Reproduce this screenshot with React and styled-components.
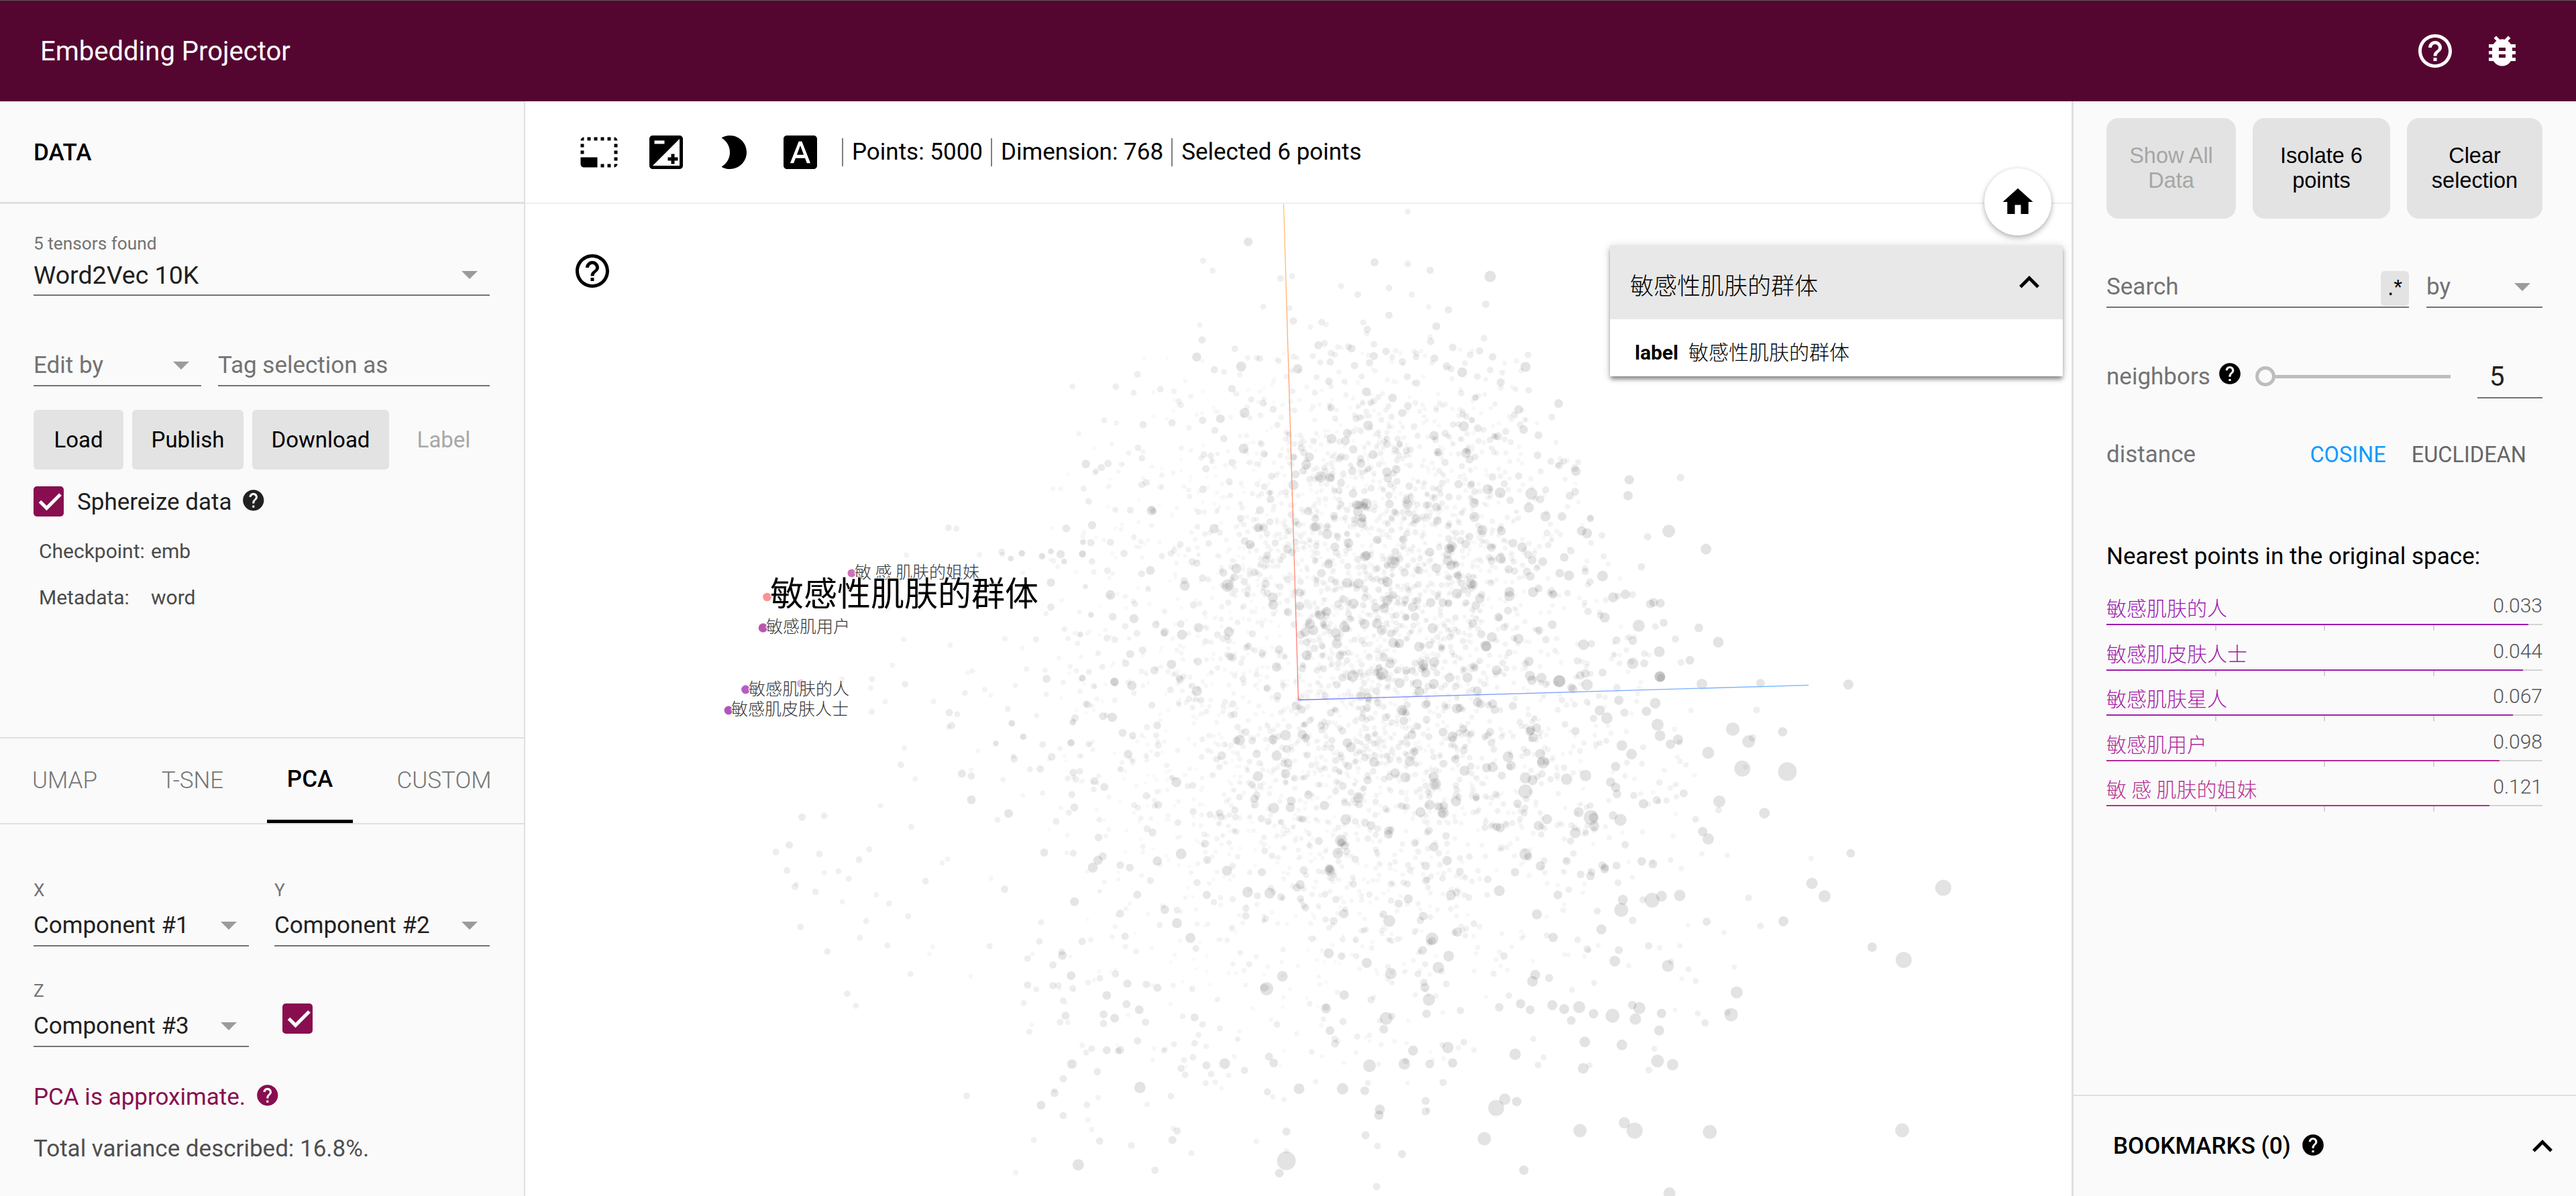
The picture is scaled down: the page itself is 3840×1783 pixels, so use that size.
import React from "react";
import styled, { createGlobalStyle } from "styled-components";
import {
  MdHelpOutline,
  MdBugReport,
  MdPhotoSizeSelectSmall,
  MdBrightness2,
  MdFontDownload,
  MdHome,
  MdHelp,
  MdExpandLess,
} from "react-icons/md";

const GlobalStyle = createGlobalStyle`
  * { box-sizing: border-box; }
  html, body { margin: 0; padding: 0; background: #fff; }
  body { font-family: Roboto, "Noto Sans CJK SC", sans-serif; font-size: 35px; color: #000; }
  svg { display: block; flex: none; }
`;

const Page = styled.div`
  display: flex;
  flex-direction: column;
  width: 3840px;
  height: 1783px;
  overflow: hidden;
`;

const Header = styled.header`
  flex: none;
  display: flex;
  align-items: center;
  height: 151px;
  padding: 0 80px 0 60px;
  border-top: 1px solid #5f5a5d;
  background: #550630;
  color: #fff;
`;

const Title = styled.h1`
  flex: 1;
  margin: 0;
  padding-top: 2px;
  font-size: 40px;
  font-weight: 400;
  line-height: 50px;
`;

const HeaderIcons = styled.div`
  display: flex;
  gap: 40px;
`;

const Body = styled.div`
  flex: 1;
  display: flex;
  min-height: 0;
`;

/* ---------- left pane ---------- */

const LeftPane = styled.aside`
  flex: none;
  display: flex;
  flex-direction: column;
  width: 783px;
  border-top: 2px solid #ebebeb;
  border-right: 2px solid #e0e0e0;
  background: #fafafa;
`;

const PaneTitle = styled.div`
  display: flex;
  align-items: center;
  height: 151px;
  padding-left: 50px;
  border-bottom: 3px solid #e0e0e0;
  font-weight: 500;
`;

const DataSection = styled.section`
  height: 795px;
  padding: 42px 51px 0 50px;
`;

const FieldLabel = styled.div`
  height: 34px;
  margin-bottom: ${(p) => p.$gap}px;
  font-size: 26.25px;
  line-height: 34px;
  color: #737373;
`;

const FieldBox = styled.div`
  display: flex;
  align-items: flex-start;
  justify-content: space-between;
  width: ${(p) => (p.$w ? `${p.$w}px` : "auto")};
  height: 57px;
  border-bottom: 2px solid #737373;
  font-size: ${(p) => p.$size || 35}px;
  line-height: 52px;
  white-space: nowrap;
  color: ${(p) => (p.$placeholder ? "#737373" : "#212121")};
`;

const Caret = styled.span`
  width: 0;
  height: 0;
  margin: 20px 18px 0 0;
  border: 12px solid transparent;
  border-top-color: #9b9b9b;
  border-bottom: 0;
`;

const FieldRow = styled.div`
  display: flex;
  gap: ${(p) => p.$gap}px;
  margin-top: ${(p) => p.$top}px;
`;

const ButtonRow = styled.div`
  display: flex;
  gap: 13px;
  margin-top: 35px;
`;

const FlatButton = styled.button`
  width: ${(p) => p.$w}px;
  height: 89px;
  padding: 0;
  border: 0;
  border-radius: 6px;
  background: ${(p) => (p.disabled ? "transparent" : "#e3e3e3")};
  color: ${(p) => (p.disabled ? "#a8a8a8" : "#000")};
  font-family: inherit;
  font-size: 33px;
`;

const CheckRow = styled.div`
  display: flex;
  align-items: center;
  height: 45px;
  margin-top: 25px;
  color: #212121;

  span { margin: 0 14px 0 20px; padding-top: 1px; }
  svg:last-child { margin-top: -4px; }
`;

const MetaGrid = styled.dl`
  display: grid;
  grid-template-columns: 167px 1fr;
  row-gap: 29px;
  margin: 32px 0 0 8px;
  font-size: 30px;
  line-height: 40px;
  color: #4a4a4a;

  dt, dd { margin: 0; }
`;

const Tabs = styled.nav`
  display: flex;
  height: 130px;
  border-top: 2px solid #e0e0e0;
  border-bottom: 2px solid #e0e0e0;
`;

const Tab = styled.div`
  display: flex;
  align-items: center;
  justify-content: center;
  width: ${(p) => p.$w}px;
  height: 126px;
  margin: 0 ${(p) => (p.$active ? 17 : 0)}px;
  padding-bottom: ${(p) => (p.$active ? 1 : 2)}px;
  padding-left: ${(p) => (p.$active ? 0 : 1)}px;
  border-bottom: ${(p) => (p.$active ? "5px solid #000" : "0")};
  color: ${(p) => (p.$active ? "#000" : "#757575")};
  font-weight: ${(p) => (p.$active ? 500 : 300)};
`;

const Projection = styled.section`
  padding: 81px 51px 0 50px;
`;

const Field = styled.div`
  width: 321px;
`;

const ToggleCell = styled.div`
  display: flex;
  align-items: flex-end;
  padding: 0 0 20px 12px;
`;

const Notice = styled.div`
  display: flex;
  align-items: center;
  gap: 14px;
  height: 40px;
  margin-top: 54px;
  color: #880e4f;

  svg { margin-top: -5px; }
`;

const Variance = styled.div`
  margin-top: 38px;
  line-height: 40px;
  color: #4f4f4f;
`;

/* ---------- centre ---------- */

const Main = styled.main`
  position: relative;
  flex: 1;
  display: flex;
  flex-direction: column;
  background: #fff;
`;

const Toolbar = styled.div`
  flex: none;
  display: flex;
  align-items: center;
  height: 153px;
  padding-left: 80px;
  border-bottom: 2px solid #eee;
`;

const ToolIcons = styled.div`
  display: flex;
  gap: 40px;
  margin-right: 32px;
`;

const Stat = styled.div`
  height: 42px;
  margin-right: 12px;
  padding-left: 13px;
  border-left: 2px solid #808080;
  line-height: 42px;
  white-space: nowrap;
`;

const Cloud = styled.svg`
  width: 2305px;
  height: 1479px;
`;

const CanvasHelp = styled.div`
  position: absolute;
  left: 70px;
  top: 223px;
`;

const HomeButton = styled.div`
  position: absolute;
  top: 100px;
  right: 30px;
  display: flex;
  align-items: center;
  justify-content: center;
  width: 100px;
  height: 100px;
  border-radius: 50%;
  background: #fff;
  box-shadow: 0 4px 8px rgba(0, 0, 0, 0.26), 0 0 5px rgba(0, 0, 0, 0.1);
`;

const InfoCard = styled.div`
  position: absolute;
  top: 215px;
  right: 13px;
  width: 675px;
  background: #fff;
  box-shadow: 0 5px 6px -1px rgba(0, 0, 0, 0.4), 0 2px 12px rgba(0, 0, 0, 0.2);
`;

const InfoHead = styled.div`
  display: flex;
  align-items: center;
  justify-content: space-between;
  height: 110px;
  padding: 0 19px 0 30px;
  background: #e8e8e8;
  font-size: 35px;
  font-weight: 300;

  span { padding-top: 4px; }
  svg { margin-right: 1px; }
`;

const InfoBody = styled.div`
  display: flex;
  align-items: center;
  gap: 15px;
  height: 85px;
  padding: 14px 0 0 37px;
  font-size: 30px;
  font-weight: 300;
  line-height: 40px;

  b { font-weight: 700; }
`;

const PointLabel = styled.text`
  font-family: "Noto Sans CJK SC", sans-serif;
  font-size: ${(p) => (p.$selected ? 50 : 25)}px;
  font-weight: ${(p) => (p.$selected ? 400 : 300)};
  fill: ${(p) => (p.$selected ? "#000" : "#333")};
  stroke: #fff;
  stroke-opacity: 0.75;
  stroke-width: 3px;
  paint-order: stroke;
  white-space: pre;
`;

/* ---------- right pane ---------- */

const RightPane = styled.aside`
  flex: none;
  display: flex;
  flex-direction: column;
  width: 752px;
  border-left: 3px solid #e0e0e0;
  background: #fafafa;
`;

const Inspector = styled.section`
  flex: 1;
  padding: 25px 50px 0 49px;
`;

const ActionRow = styled.div`
  display: flex;
  gap: 25px;
`;

const ActionButton = styled.button`
  width: ${(p) => p.$w}px;
  height: 150px;
  padding: 0 25px;
  border: 0;
  border-radius: 18px;
  background: #e3e3e3;
  color: ${(p) => (p.disabled ? "#a6a6a6" : "#000")};
  font-family: "Liberation Sans", Arial, sans-serif;
  font-size: 32.5px;
  line-height: 37px;
`;

const RegexToggle = styled.span`
  width: 42px;
  height: 52px;
  margin-top: 2px;
  border-radius: 6px;
  background: #e3e3e3;
  color: #000;
  font-family: "Liberation Sans", Arial, sans-serif;
  font-size: 33px;
  line-height: 50px;
  text-align: center;
`;

const ParamRow = styled.div`
  display: flex;
  align-items: flex-start;
  height: ${(p) => p.$h}px;
  margin-top: ${(p) => p.$top}px;
  line-height: 52px;
  color: #737373;
`;

const HelpDot = styled(MdHelp)`
  margin: 2px 0 0 10px;
  color: #000;
`;

const Slider = styled.div`
  display: flex;
  align-items: center;
  width: 291px;
  height: 50px;
  margin-left: 19px;
`;

const Knob = styled.span`
  width: 30px;
  height: 30px;
  border: 5px solid #bdbdbd;
  border-radius: 50%;
`;

const Track = styled.span`
  flex: 1;
  height: 5px;
  background: #bdbdbd;
`;

const NumberInput = styled.div`
  width: 97px;
  height: 58px;
  margin-left: auto;
  padding-left: 18px;
  border-bottom: 2px solid #737373;
  color: #212121;
  font-size: 40px;
`;

const MetricGroup = styled.div`
  display: flex;
  gap: 38px;
  margin-left: auto;
  padding-right: 24px;
  font-size: 32.5px;
`;

const Metric = styled.span`
  color: ${(p) => (p.$active ? "#0f9bff" : "#666")};
`;

const ListTitle = styled.div`
  margin-top: 102px;
  margin-bottom: 24px;
  line-height: 52px;
`;

const Neighbor = styled.div`
  height: 67.5px;
`;

const NeighborText = styled.div`
  display: flex;
  justify-content: space-between;
  height: 50px;
  font-size: 30px;
  line-height: 40px;
`;

const NeighborName = styled.span`
  padding-top: 8px;
  color: ${(p) => p.$color};
  font-weight: 300;
  white-space: pre;
`;

const NeighborValue = styled.span`
  padding-top: 3px;
  color: #555;
  font-weight: 300;
`;

const Bar = styled.div`
  height: 2px;
  background: #d3d3d3;
`;

const BarFill = styled.div`
  height: 2px;
  background: ${(p) => p.$color};
`;

const Ticks = styled.div`
  display: grid;
  grid-template-columns: repeat(4, 1fr);
  height: 8px;

  span { border-right: 2px solid #d3d3d3; margin-right: -1px; }
  span:last-child { border: 0; }
`;

const Bookmarks = styled.footer`
  display: flex;
  align-items: center;
  height: 151px;
  padding: 0 20px 0 59px;
  border-top: 2px solid #e0e0e0;
  font-weight: 500;

  svg:last-child { margin-left: auto; }
`;

const BookmarkHelp = styled(MdHelp)`
  margin: -3px 0 0 14px;
`;

/* ---------- data ---------- */

const NEIGHBORS = [
  { name: "敏感肌肤的人", value: "0.033", color: "#9b19b1" },
  { name: "敏感肌皮肤人士", value: "0.044", color: "#9e1cad" },
  { name: "敏感肌肤星人", value: "0.067", color: "#a521a6" },
  { name: "敏感肌用户", value: "0.098", color: "#af2a9b" },
  { name: "敏 感 肌肤的姐妹", value: "0.121", color: "#b63092" },
];

const HIGHLIGHTS = [
  { x: 1194, y: 1019, r: 6, fill: "#dfa6dc" },
  { x: 1269.5, y: 854.5, r: 6, fill: "#cf70b8", text: "敏 感 肌肤的姐妹", tx: 1274, ty: 862 },
  { x: 1143.5, y: 890, r: 6.3, fill: "#ff9191", text: "敏感性肌肤的群体", tx: 1148, ty: 903, selected: true },
  { x: 1137.5, y: 936, r: 6.8, fill: "#bb57ab", text: "敏感肌用户", tx: 1142, ty: 943 },
  { x: 1111.5, y: 1028, r: 6.4, fill: "#b65cc6", text: "敏感肌肤的人", tx: 1116, ty: 1036 },
  { x: 1086, y: 1059, r: 6.4, fill: "#b055bd", text: "敏感肌皮肤人士", tx: 1090, ty: 1066 },
];

/* Projected points, stored per tile as x, y, radius triples in tile units. */
const TILES = [
  {
    ox: 1100, oy: 1000, sx: 0.8476, sy: 2.0026,
    pts: [
      81,437,5.5,109,433,5,180,403,4,219,466,4.5,65,520,5.5,48,541,5,62,596,5,103,547,5,109,603,4,127,599,4.5,140,621,4.5,153,564,5,166,533,4.5,
      72,645,5,74,637,4,98,660,5,132,690,4,175,669,4,191,695,4.5,162,747,4.5,215,733,4.5,79,765,5,154,797,4.5,113,838,5,189,820,4.5,138,964,5,149,1000,4.5,
      218,905,4.5,237,628,5,246,824,3.5,242,846,3.5,258,574,4,265,563,4,318,822,4.5,337,652,5.5,320,621,3.5,294,912,3.5,289,1269,5,351,1498,4,
      206,281,5,210,230,4,224,323,4,283,307,6,295,314,5.5,295,295,3.5,295,385,6.5,346,157,5,349,263,5.5,348,255,4,342,426,6.5,328,445,4.5,335,325,4,
      303,239,3.5,326,217,4.5,369,294,4.5,382,293,5.5,493,249,6.5,387,543,6,402,450,5,421,215,5.5,385,220,5,407,232,4,361,197,5,432,300,5,427,324,5,
      425,408,6,463,347,6,516,373,5.5,486,185,6,473,139,7,476,33,6.5,390,24,6,423,153,5,531,222,5,385,365,4,360,372,3.5,
      1403,41,7.5,1292,37,6.5,1218,40,8,1257,174,10,1320,182,7,1277,211,9.5,1282,200,5.5,1226,245,9,1269,292,12,1273,287,4,1326,301,14,1240,390,9,
      1239,416,5,1297,425,8,1219,480,7,1226,502,8.5,1406,545,6.5,1356,560,4,1218,547,4,1250,551,4,1357,635,8.5,1373,673,9,1523,648,12,1277,678,5,
      1321,748,7.5,1292,762,5,1224,749,6,1246,781,4,1433,825,7,1473,863,12,1175,881,9,1179,868,4.5,1155,685,11,1167,673,8,1190,671,8.5,1116,714,10.5,
      1091,772,7.5,1262,960,9,1255,1027,10,1250,1020,5,1222,1051,5.5,1213,1023,4.5,1210,926,4.5,1201,891,4.5,1259,885,4,1108,867,8,1113,834,6,1190,821,4,
      1063,1004,9,1044,1010,7.5,1029,998,7.5,1105,1030,10.5,1081,1024,7,1134,1040,8.5,1139,1007,9,1130,998,6.5,1167,1023,7,1164,1074,7.5,1053,1044,6.5,
      1070,1108,8,1117,1117,8,1158,1129,4.5,1162,1165,9.5,1181,1176,8.5,1151,1192,5,1068,1187,8,1076,1178,4.5,1018,1154,4.5,1011,1177,5,1005,1099,4.5,
      982,1145,8.5,958,1305,12,969,1279,8.5,984,1286,7,943,1397,10,1064,1373,10,1120,1350,8.5,1133,1373,12,1228,1377,10.5,1471,1372,10.5,993,1491,7,
      1177,1560,9,839,1443,6,807,1540,5.5,808,1419,5,793,1387,6,693,1463,14,693,1434,4,684,1500,6.5,693,1376,6,811,1310,7.5,810,1327,7,869,1284,6,869,1316,6,
      872,1312,4,792,1254,6.5,764,1248,8.5,796,1231,4.5,709,1248,8,730,1227,4,798,1179,9.5,842,1174,8.5,844,1165,5,853,1134,7.5,874,1174,6.5,903,1171,7,
      897,1125,8.5,890,1117,4.5,891,1229,5.5,846,1231,3.5,819,1038,9.5,816,1070,6.5,798,1088,4,748,1074,6.5,758,1106,4,754,1099,5,681,1056,5,669,1257,5.5,
      676,1272,4,690,1280,4,671,1152,6,677,1171,6.5,686,1178,3,640,1193,5.5,615,1173,8,592,1178,6,598,1204,5,565,1206,5,560,1187,5.5,575,1154,5,591,1231,4.5,
      603,1228,4,611,1246,3.5,620,1208,4,508,1244,8.5,430,1475,8.5,527,1491,5.5,573,1440,4.5,497,1417,5,555,1374,5.5,550,1367,4,549,1401,6,457,1404,5.5,
      447,1370,4,442,1341,4,441,1296,5,411,1328,5.5,383,1297,6.5,400,1261,6,400,1252,4,411,1218,5.5,422,1174,7,454,1197,5.5,455,1274,4,547,1270,5,517,1295,4,
      374,1401,4.5,466,1133,6,483,1132,6,440,1140,4.5,435,1118,4,505,1105,5.5,524,1162,3.5,526,1127,3.5,538,1134,4.5,551,1115,4.5,577,1112,5,582,1087,4.5,
      368,1078,4.5,371,1057,3.5,361,992,4.5,366,938,5.5,377,951,4.5,398,940,5.5,405,940,5,421,910,6.5,398,878,5.5,410,850,6.5,366,859,5,381,808,5,435,808,5.5,
      446,803,4,655,1405,4,372,845,3.5,383,751,4.5,414,1030,6,407,1049,5,417,1050,4,423,948,5,411,985,5,462,1026,6,462,1053,5.5,466,969,6.5,476,1037,6.5,
      491,995,6,507,1012,6.5,515,1049,5.5,516,936,5.5,530,946,6,477,905,5.5,577,1035,6,587,1056,5,609,1068,4.5,688,912,8,668,949,10,665,946,6,
      825,904,8.5,873,982,9,885,886,8.5,898,852,8,877,800,9.5,877,806,6,823,747,9,766,968,7,743,1008,7.5,743,1005,5,1004,927,8,1025,917,6,989,994,7,
      1001,1012,6.5,1030,796,7,1061,803,5,909,780,7,962,657,8,672,664,8,644,661,8,560,547,8,455,566,7,461,554,6,748,596,8,748,594,6,995,548,9,
      1014,583,7,912,600,6,896,567,7,762,507,9,762,510,6,758,545,8,734,508,6,891,424,8.5,890,426,6,881,338,9,881,340,6,1078,438,11,1081,438,7,1058,484,8,
      1115,445,9,995,360,10.5,995,320,8.5,1017,274,9,1015,272,6,973,257,8,1047,324,8.5,1071,313,8.5,1109,286,7,1129,249,8,1117,223,8,1162,161,9,
      1165,194,8,1098,141,8.5,1109,348,7,1073,42,8.5,1038,31,9,1165,18,8,1159,97,8,1148,121,7,1113,88,7,634,207,8,630,208,6,692,192,8,676,205,7,
      713,190,7,692,308,7,677,410,8,698,408,7,784,378,8,768,444,8,741,402,7,839,118,8,840,121,6,770,215,7,1144,397,7,1161,386,6,1132,372,5.5,
      1195,366,6,1178,350,4,1198,281,4,1204,118,4,1287,117,5,1142,569,6.5,1156,577,6.5,1192,591,4,1110,582,6,1095,592,6.5,1036,669,6.5,895,935,5,
    ],
  },
  {
    ox: 1500, oy: 300, sx: 1.206, sy: 2.119,
    pts: [
      435,128,6.5,354,188,4.5,371,219,4.5,493,244,5,514,237,4.5,662,193,6,722,33,4.5,722,198,5,762,218,5.5,870,238,8.5,602,268,4.5,632,295,5,688,274,5,
      729,295,4.5,862,325,5.5,795,343,5.5,759,334,4,688,360,5.5,773,395,6,567,382,5,575,390,4,547,397,4,642,383,4.5,649,405,5.5,648,419,4,509,338,4.5,
      516,378,5.5,462,333,4.5,348,391,4,352,438,5.5,411,466,5,434,495,4,456,497,5,561,455,6,572,449,5,615,460,5,584,480,5,591,485,4.5,661,452,5,
      661,489,6,653,510,5.5,626,519,5.5,763,443,5.5,762,428,4,859,433,5,851,473,5.5,834,485,5,938,485,5,700,472,4,738,482,4.5,733,474,4,712,507,5.5,792,521,6,
      800,530,5,870,533,5,374,532,5.5,517,491,4.5,551,489,4.5,490,505,4.5,236,547,5,197,586,5,119,585,4.5,229,605,4.5,277,594,5,310,632,4.5,
      889,572,6,847,554,5,844,620,4.5,993,639,6.5,921,658,6.5,981,682,5,932,690,4,930,721,6.5,924,706,5,884,743,6,907,761,4.5,385,687,6.5,
      353,692,5.5,246,706,5.5,298,700,5.5,237,779,5,244,812,5,183,828,5.5,171,841,5.5,161,853,4.5,207,831,4,139,908,4.5,148,948,5,196,975,4.5,
      84,908,3.5,98,908,3.5,28,1112,5,8,1129,4.5,64,1122,5,80,1106,4.5,104,1138,4.5,137,1114,5.5,138,1077,4.5,182,1167,5,142,1217,4,259,1166,6.5,261,977,7,262,974,5,
      223,976,5,176,692,4.5,198,701,4,190,767,3.5,994,835,5.5,1024,853,7,1022,843,5.5,1028,825,4.5,1120,880,7,1212,873,5.5,1118,930,7,944,924,9,960,942,6,
      1013,930,6,888,921,8,999,996,6.5,1050,1003,5.5,1071,1056,5,1191,1042,9.5,1153,1060,5.5,1258,1099,8,1015,1104,5.5,1003,1125,6.5,1074,1122,4.5,
      1041,1170,5.5,1072,1184,8,1142,1155,5.5,938,1117,6,911,1080,6.5,972,1048,5,942,1185,6.5,936,1170,6,995,1175,6.5,947,1235,7.5,957,1223,6,983,1242,6.5,
      984,1240,5,1009,1238,5,1091,1251,7.5,1113,1242,7,1126,1243,5,1158,1272,6.5,1164,1267,6.5,1176,1270,6.5,1046,1296,5.5,1076,1315,7.5,1137,1341,9,
      1182,1332,6,1167,1344,5,1245,1348,6.5,1203,1383,5.5,1280,1393,8,1126,1388,6.5,1097,1387,6,1052,1398,5.5,1038,1401,8,1174,1423,8,1147,1429,5,
      1126,1460,8.5,1147,1460,6,1229,1450,6.5,1213,1457,5,1175,1501,8,1177,1505,6,1072,1489,6,1041,1492,6.5,1027,1452,5.5,994,1516,9,1019,1541,6.5,
      1098,1537,5.5,945,1513,7,565,871,8.5,564,873,5,701,847,6.5,453,1031,7,453,1033,5,398,1214,9.5,400,1216,6,696,1140,9.5,697,1138,6,647,956,8.5,634,960,6.5,
      640,1000,6.5,641,1002,5,195,1385,5,235,1365,5,245,1418,5.5,133,1369,4.5,152,1306,4.5,266,1482,6,297,1463,7,311,1506,5.5,137,1506,5,194,1518,6,
      564,1307,7,560,1305,5.5,608,1344,8,611,1350,6,537,1362,7,675,1355,7.5,718,1314,6,719,1315,4.5,885,1314,6.5,886,1316,5,839,1334,6.5,873,1377,7.5,
      921,1382,7.5,742,1407,7.5,862,1405,8,707,1397,7,486,1471,7,623,1500,8.5,676,1492,9,673,1500,7,690,1461,7,763,1268,7,785,1268,6.5,795,1268,5.5,
      902,1293,6,797,1505,7,777,793,6,733,712,5,789,733,5.5,833,816,6,775,790,5,
    ],
  },
  {
    ox: 1040, oy: 780, sx: 2.6133, sy: 3,
    pts: [
      977,20,5,1008,24,4.5,813,143,4,1098,141,4,1185,128,5,1187,140,4,1263,135,4.5,1220,158,4,1342,147,4.5,1377,126,4,1373,162,3,1428,171,4,1499,138,5,1501,84,4,
      1500,60,3.5,1505,41,3.5,1383,22,3,1552,62,3,1376,375,5.5,1357,404,4,1418,344,3.5,1533,411,4,1511,283,3.5,1267,222,3.5,742,382,4,867,384,3.5,803,520,4,984,545,4,1197,516,4,
      1318,520,4.5,1442,516,4,1480,538,4,1490,498,4,1266,558,3.5,1407,603,3.5,759,635,4,1069,661,4,1052,670,3.5,1281,652,4,1353,658,4,1524,665,4.5,
      1448,671,3,562,697,4,679,697,4.5,674,737,4,808,720,5,1041,759,4.5,1118,743,4,1142,771,3.5,1237,725,4,1358,765,4,1424,712,4,1498,694,5,
      1543,729,4.5,731,799,4,919,797,4,678,843,4.5,980,847,5.5,1011,854,4.5,1208,831,4.5,1320,860,4,1512,808,5,1476,838,3,1224,895,4.5,1462,890,4.5,989,905,5.5,
      977,912,4,1267,955,4.5,1454,982,5,1161,985,4,
    ],
  },
];

/* Dense core: x, y, spread x, spread y, number of points. */
const CORES = [
  [2050, 790, 150, 150, 1750],
  [2100, 1120, 180, 190, 1750],
  [1830, 1120, 170, 230, 850],
];

function seeded(seed) {
  let s = seed;
  return () => {
    s = (s + 0x6d2b79f5) | 0;
    let t = Math.imul(s ^ (s >>> 15), 1 | s);
    t = (t + Math.imul(t ^ (t >>> 7), 61 | t)) ^ t;
    return ((t ^ (t >>> 14)) >>> 0) / 4294967296;
  };
}

function buildPoints() {
  const points = [];
  const rand = seeded(29);
  CORES.forEach(([cx, cy, sx, sy, count]) => {
    for (let i = 0; i < count; i += 1) {
      const m = Math.sqrt(-2 * Math.log(1 - rand()));
      const a = rand() * Math.PI * 2;
      const x = cx + m * Math.cos(a) * sx;
      const y = cy + m * Math.sin(a) * sy;
      const r = Math.min(7.5, 2.9 - Math.log(1 - rand()) * 1.1 + Math.max(-0.2, (x - 2000) / 1100));
      const inside = y > 510 && y < 1590 && x > 1560 && x < 2530 && x - 2280 < (y - 560) * 0.45;
      if (inside) points.push({ x, y, r });
    }
  });
  TILES.forEach(({ ox, oy, sx, sy, pts }) => {
    for (let i = 0; i < pts.length; i += 3) {
      points.push({ x: ox + pts[i] / sx, y: oy + pts[i + 1] / sy, r: pts[i + 2] });
    }
  });
  return points;
}

const POINTS = buildPoints();
const opacityOf = (r) => Math.min(0.11, Math.max(0.022, (r - 1.9) * 0.022)).toFixed(3);

/* ---------- pieces ---------- */

function Select({ label, gap = 10, value, w, size, placeholder }) {
  return (
    <div>
      {label && <FieldLabel $gap={gap}>{label}</FieldLabel>}
      <FieldBox $w={w} $size={size} $placeholder={placeholder}>
        {value}
        <Caret />
      </FieldBox>
    </div>
  );
}

function Checkbox() {
  return (
    <svg width="45" height="45" viewBox="0 0 45 45">
      <rect width="45" height="45" rx="5" fill="#880e4f" />
      <path d="M9.5 22.5 L19.5 32.5 L40 12" fill="none" stroke="#fff" strokeWidth="5.2" />
    </svg>
  );
}

function ExposureIcon() {
  return (
    <svg width="60" height="60" viewBox="0 0 24 24">
      <path d="M15 17v2h2v-2h2v-2h-2v-2h-2v2h-2v2h2zm5-15H4c-1.1 0-2 .9-2 2v16c0 1.1.9 2 2 2h16c1.1 0 2-.9 2-2V4c0-1.1-.9-2-2-2zM5 5h6v2H5V5zm15 15H4L20 4v16z" />
    </svg>
  );
}

function Scatter() {
  return (
    <Cloud viewBox="783 304 2305 1479">
      <defs>
        <linearGradient id="axisUp" gradientUnits="userSpaceOnUse" x1="1913" y1="304" x2="1935" y2="1044">
          <stop offset="0" stopColor="#ffbd66" />
          <stop offset="1" stopColor="#ff6b6b" />
        </linearGradient>
        <linearGradient id="axisSide" gradientUnits="userSpaceOnUse" x1="1935" y1="1043" x2="2696" y2="1021">
          <stop offset="0" stopColor="#7373ff" />
          <stop offset="1" stopColor="#7cc4ff" />
        </linearGradient>
      </defs>
      <g>
        {POINTS.map((p, i) => (
          <circle key={i} cx={p.x.toFixed(1)} cy={p.y.toFixed(1)} r={p.r.toFixed(1)} fillOpacity={opacityOf(p.r)} />
        ))}
      </g>
      <line x1="1913.5" y1="304" x2="1935.5" y2="1044" stroke="url(#axisUp)" strokeWidth="1.2" />
      <line x1="1935" y1="1043.5" x2="2696" y2="1021.5" stroke="url(#axisSide)" strokeWidth="1.3" />
      {HIGHLIGHTS.map((h) => (
        <circle key={h.x} cx={h.x} cy={h.y} r={h.r} fill={h.fill} />
      ))}
      {HIGHLIGHTS.filter((h) => h.text).map((h) => (
        <PointLabel key={h.text} x={h.tx} y={h.ty} $selected={h.selected}>
          {h.text}
        </PointLabel>
      ))}
    </Cloud>
  );
}

export default function App() {
  return (
    <Page>
      <GlobalStyle />
      <Header>
        <Title>Embedding Projector</Title>
        <HeaderIcons>
          <MdHelpOutline size={60} />
          <MdBugReport size={60} />
        </HeaderIcons>
      </Header>
      <Body>
        <LeftPane>
          <PaneTitle>DATA</PaneTitle>
          <DataSection>
            <Select label="5 tensors found" gap={4} value="Word2Vec 10K" size={37.5} />
            <FieldRow $gap={25} $top={78}>
              <Select value="Edit by" w={250} placeholder />
              <FieldBox $w={405} $placeholder>Tag selection as</FieldBox>
            </FieldRow>
            <ButtonRow>
              <FlatButton $w={134}>Load</FlatButton>
              <FlatButton $w={166}>Publish</FlatButton>
              <FlatButton $w={204}>Download</FlatButton>
              <FlatButton $w={137} disabled>Label</FlatButton>
            </ButtonRow>
            <CheckRow>
              <Checkbox />
              <span>Sphereize data</span>
              <MdHelp size={37.5} />
            </CheckRow>
            <MetaGrid>
              <dt>Checkpoint:</dt>
              <dd>emb</dd>
              <dt>Metadata:</dt>
              <dd>word</dd>
            </MetaGrid>
          </DataSection>
          <Tabs>
            <Tab $w={192}>UMAP</Tab>
            <Tab $w={189}>T-SNE</Tab>
            <Tab $w={128} $active>PCA</Tab>
            <Tab $w={237}>CUSTOM</Tab>
          </Tabs>
          <Projection>
            <FieldRow $gap={38} $top={0}>
              <Field><Select label="X" value="Component #1" /></Field>
              <Field><Select label="Y" value="Component #2" /></Field>
            </FieldRow>
            <FieldRow $gap={38} $top={49}>
              <Field><Select label="Z" value="Component #3" /></Field>
              <ToggleCell><Checkbox /></ToggleCell>
            </FieldRow>
            <Notice>
              PCA is approximate.
              <MdHelp size={37.5} />
            </Notice>
            <Variance>Total variance described: 16.8%.</Variance>
          </Projection>
        </LeftPane>

        <Main>
          <Toolbar>
            <ToolIcons>
              <MdPhotoSizeSelectSmall size={60} />
              <ExposureIcon />
              <MdBrightness2 size={60} />
              <MdFontDownload size={60} />
            </ToolIcons>
            <Stat>Points: 5000</Stat>
            <Stat>Dimension: 768</Stat>
            <Stat>Selected 6 points</Stat>
          </Toolbar>
          <Scatter />
          <CanvasHelp>
            <MdHelpOutline size={60} />
          </CanvasHelp>
          <HomeButton>
            <MdHome size={54} />
          </HomeButton>
          <InfoCard>
            <InfoHead>
              <span>敏感性肌肤的群体</span>
              <MdExpandLess size={60} />
            </InfoHead>
            <InfoBody>
              <b>label</b>
              <span>敏感性肌肤的群体</span>
            </InfoBody>
          </InfoCard>
        </Main>

        <RightPane>
          <Inspector>
            <ActionRow>
              <ActionButton $w={193} disabled>Show All Data</ActionButton>
              <ActionButton $w={205}>Isolate 6 points</ActionButton>
              <ActionButton $w={202}>Clear selection</ActionButton>
            </ActionRow>
            <FieldRow $gap={26} $top={76}>
              <FieldBox $w={451} $placeholder>
                Search
                <RegexToggle>.*</RegexToggle>
              </FieldBox>
              <Select value="by" w={173} placeholder />
            </FieldRow>
            <ParamRow $h={58} $top={77}>
              neighbors
              <HelpDot size={38} />
              <Slider>
                <Knob />
                <Track />
              </Slider>
              <NumberInput>5</NumberInput>
            </ParamRow>
            <ParamRow $h={50} $top={58}>
              distance
              <MetricGroup>
                <Metric $active>COSINE</Metric>
                <Metric>EUCLIDEAN</Metric>
              </MetricGroup>
            </ParamRow>
            <ListTitle>Nearest points in the original space:</ListTitle>
            {NEIGHBORS.map((n) => (
              <Neighbor key={n.name}>
                <NeighborText>
                  <NeighborName $color={n.color}>{n.name}</NeighborName>
                  <NeighborValue>{n.value}</NeighborValue>
                </NeighborText>
                <Bar>
                  <BarFill $color={n.color} style={{ width: `${(1 - Number(n.value)) * 100}%` }} />
                </Bar>
                <Ticks>
                  <span />
                  <span />
                  <span />
                  <span />
                </Ticks>
              </Neighbor>
            ))}
          </Inspector>
          <Bookmarks>
            BOOKMARKS (0)
            <BookmarkHelp size={38} />
            <MdExpandLess size={60} />
          </Bookmarks>
        </RightPane>
      </Body>
    </Page>
  );
}
